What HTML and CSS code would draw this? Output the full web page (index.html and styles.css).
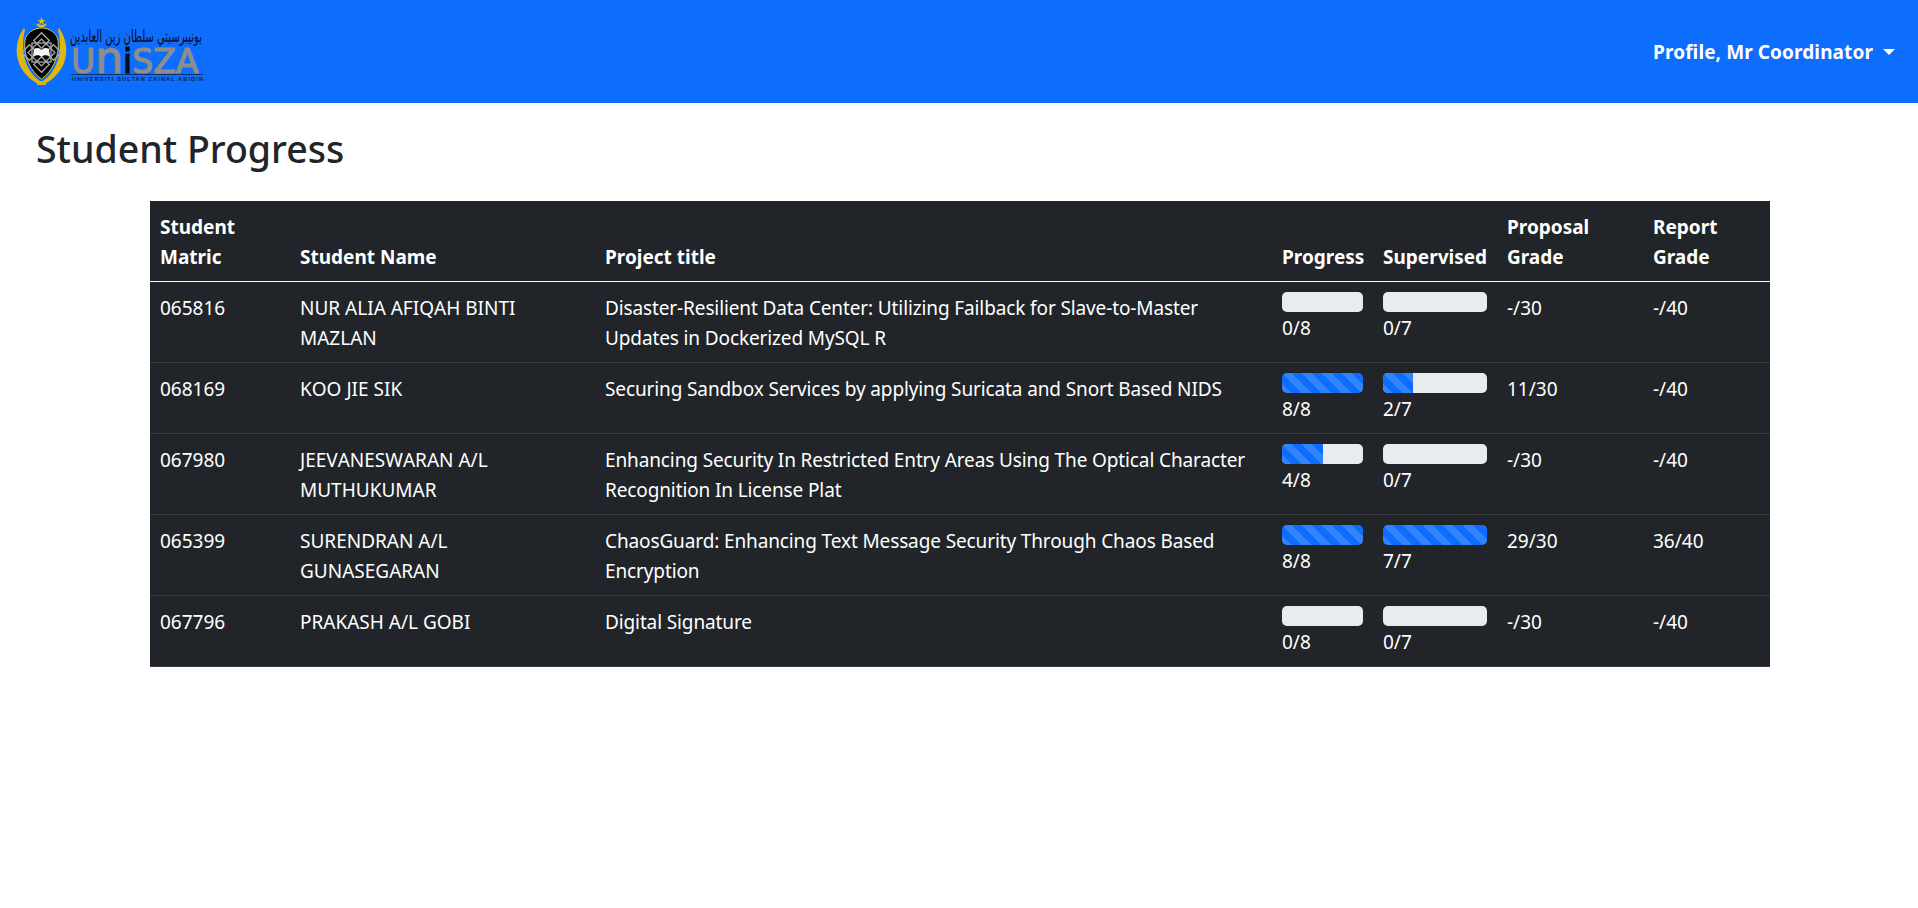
FILE: index.html
```html
<!DOCTYPE html>
<html lang="en">
<head>
<meta charset="utf-8">
<title>Student Progress</title>
<link rel="stylesheet" href="styles.css">
</head>
<body>
<nav class="navbar">
  <svg class="logo" viewBox="12 13 194 76" width="194" height="76" aria-label="UniSZA logo">
    <path d="M24 27 C13 42 12 68 38 83 L40 80 C27 71 19 52 25 29 Z" fill="#e0b70f"/>
    <path d="M59 27 C70 42 71 68 45 83 L43 80 C56 71 64 52 58 29 Z" fill="#e0b70f"/>
    <rect x="37" y="80" width="9" height="4" fill="#d8b020"/>
    <path d="M41.500 27 C50 27 57 33 58 39 C60 55 52 71 41.500 78 C31 71 23 55 25 39 C26 33 33 27 41.500 27 Z" fill="#000" stroke="#d9c13a" stroke-width="1"/>
    <path d="M37 23 A5 5 0 0 0 46 23 A6 4.500 0 0 1 37 23 Z" fill="#e2c018" stroke="#e2c018" stroke-width="1.200"/>
    <polygon points="41.500,16 42.500,19 45.500,19 43,20.800 44,23.500 41.500,21.800 39,23.500 40,20.800 37.500,19 40.500,19" fill="#e2c018"/>
    <g fill="none" stroke="#a8a8a8" stroke-width="1.300">
      <rect x="32" y="42" width="19" height="19"/>
      <rect x="32" y="42" width="19" height="19" transform="rotate(45 41.500 51.500)"/>
      <rect x="36" y="34" width="11" height="11" transform="rotate(45 41.500 39.500)"/>
      <rect x="36" y="58" width="11" height="11" transform="rotate(45 41.500 63.500)"/>
      <rect x="24" y="46" width="11" height="11" transform="rotate(45 29.500 51.500)"/>
      <rect x="48" y="46" width="11" height="11" transform="rotate(45 53.500 51.500)"/>
    </g>
    <path d="M34 48 C37 46 40 47 41.500 49 C43 47 46 46 49 48 L50 55 C46 54 43 54 41.500 56 C40 54 37 54 33 55 Z" fill="#f4f4f4"/>
    <text class="logo-ar" x="136" y="41" text-anchor="middle" textLength="132" lengthAdjust="spacingAndGlyphs" direction="rtl">يونيبرسيتي سلطان زين العابدين</text>
    <text class="logo-name" x="71" y="72"><tspan>U</tspan><tspan class="logo-n">n</tspan><tspan class="logo-i">i</tspan><tspan>SZA</tspan></text>
    <rect x="71" y="73" width="132" height="1" fill="#13306e"/>
    <text class="logo-sub" x="72" y="80" textLength="131">UNIVERSITI SULTAN ZAINAL ABIDIN</text>
  </svg>
  <a class="nav-user" href="#">Profile, Mr Coordinator<span class="caret"></span></a>
</nav>
<main class="content">
  <h1 class="title">Student Progress</h1>
  <table class="grid">
    <colgroup>
      <col class="c1"><col class="c2"><col class="c3"><col class="c4"><col class="c5"><col class="c6"><col class="c7">
    </colgroup>
    <thead>
      <tr>
        <th>Student<br>Matric</th><th>Student Name</th><th>Project title</th><th>Progress</th><th>Supervised</th><th>Proposal<br>Grade</th><th>Report<br>Grade</th>
      </tr>
    </thead>
    <tbody>
      <tr>
        <td>065816</td><td class="name">NUR ALIA AFIQAH BINTI<br>MAZLAN</td>
        <td class="project">Disaster-Resilient Data Center: Utilizing Failback for Slave-to-Master<br>Updates in Dockerized MySQL R</td>
        <td><div class="bar"><div class="fill" style="width:0%"></div></div>0/8</td>
        <td><div class="bar"><div class="fill" style="width:0%"></div></div>0/7</td>
        <td>-/30</td><td>-/40</td>
      </tr>
      <tr>
        <td>068169</td><td class="name">KOO JIE SIK</td>
        <td class="project">Securing Sandbox Services by applying Suricata and Snort Based NIDS</td>
        <td><div class="bar"><div class="fill" style="width:100%"></div></div>8/8</td>
        <td><div class="bar"><div class="fill" style="width:28.57%"></div></div>2/7</td>
        <td>11/30</td><td>-/40</td>
      </tr>
      <tr>
        <td>067980</td><td class="name">JEEVANESWARAN A/L<br>MUTHUKUMAR</td>
        <td class="project">Enhancing Security In Restricted Entry Areas Using The Optical Character<br>Recognition In License Plat</td>
        <td><div class="bar"><div class="fill" style="width:50%"></div></div>4/8</td>
        <td><div class="bar"><div class="fill" style="width:0%"></div></div>0/7</td>
        <td>-/30</td><td>-/40</td>
      </tr>
      <tr>
        <td>065399</td><td class="name">SURENDRAN A/L<br>GUNASEGARAN</td>
        <td class="project">ChaosGuard: Enhancing Text Message Security Through Chaos Based<br>Encryption</td>
        <td><div class="bar"><div class="fill" style="width:100%"></div></div>8/8</td>
        <td><div class="bar"><div class="fill" style="width:100%"></div></div>7/7</td>
        <td>29/30</td><td>36/40</td>
      </tr>
      <tr>
        <td>067796</td><td class="name">PRAKASH A/L GOBI</td>
        <td class="project">Digital Signature</td>
        <td><div class="bar"><div class="fill" style="width:0%"></div></div>0/8</td>
        <td><div class="bar"><div class="fill" style="width:0%"></div></div>0/7</td>
        <td>-/30</td><td>-/40</td>
      </tr>
    </tbody>
  </table>
</main>
</body>
</html>
```
FILE: styles.css
```css
* { box-sizing: border-box; }
html, body { margin: 0; padding: 0; }
body {
  background: #fff;
  color: #212529;
  font-family: "Noto Sans", "Open Sans", sans-serif;
  font-size: 19px;
  line-height: 30px;
  overflow-x: hidden;
}
.navbar {
  height: 103px;
  background: #0d6efd;
  display: flex;
  align-items: center;
  justify-content: space-between;
  padding: 0 23px 0 12px;
}
.logo { display: block; flex: none; overflow: visible; }
.logo-ar { font-family: "DejaVu Sans", sans-serif; font-size: 17px; fill: #0a0a14; }
.logo-name { font-family: "DejaVu Sans", sans-serif; font-size: 33px; fill: #8d8d8d; stroke: #8d8d8d; stroke-width: 1.2px; }
.logo-n { font-size: 44px; }
.logo-i { fill: #0b0b12; stroke: #0b0b12; }
.logo-sub { font-family: "Liberation Sans", sans-serif; font-weight: 700; font-size: 5.6px; fill: #10204a; }
.nav-user {
  color: #fff;
  text-decoration: none;
  font-weight: 700;
  font-size: 19px;
  letter-spacing: 0.1px;
  display: flex;
  align-items: center;
}
.caret {
  width: 0;
  height: 0;
  margin-left: 10px;
  border-top: 6px solid #fff;
  border-left: 6px solid transparent;
  border-right: 6px solid transparent;
}
.content { padding: 22px 36px 0; }
.title {
  margin: 0 0 28px;
  font-size: 37.5px;
  font-weight: 500;
  line-height: 48px;
  color: #212529;
}
.grid {
  width: 1620px;
  margin-left: 114px;
  table-layout: fixed;
  border-collapse: collapse;
  background: #212529;
  color: #fff;
}
.c1 { width: 140px; }
.c2 { width: 305px; }
.c3 { width: 677px; }
.c4 { width: 101px; }
.c5 { width: 124px; }
.c6 { width: 146px; }
.c7 { width: 127px; }
th, td { padding: 11px 10px 9px; vertical-align: top; text-align: left; }
th { vertical-align: bottom; font-weight: 700; border-bottom: 1px solid #fff; }
td { border-bottom: 1px solid #373b3e; }
.name { font-kerning: none; }
.project { letter-spacing: -0.12px; }
.bar { height: 20px; margin: -1px 0 1px; background: #e9ecef; border-radius: 5px; overflow: hidden; }
.fill {
  height: 100%;
  background-color: #0d6efd;
  background-image: linear-gradient(45deg, rgba(255,255,255,.15) 25%, transparent 25%, transparent 50%, rgba(255,255,255,.15) 50%, rgba(255,255,255,.15) 75%, transparent 75%, transparent);
  background-size: 20px 20px;
}
```
